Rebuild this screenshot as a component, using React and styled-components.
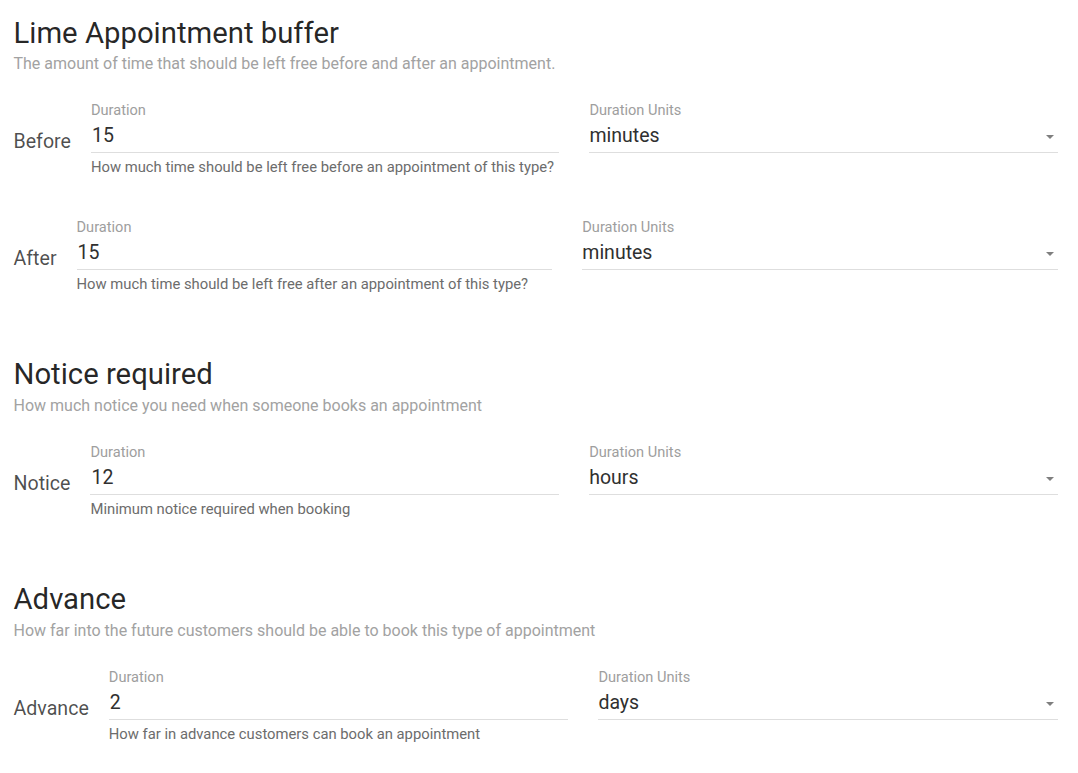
import React from 'react';
import styled, { createGlobalStyle } from 'styled-components';

const GlobalStyle = createGlobalStyle`
  html, body {
    margin: 0;
    padding: 0;
    background: #ffffff;
  }
  body {
    font-family: Roboto, "Noto Sans", sans-serif;
  }
`;

const sections = [
  {
    title: 'Lime Appointment buffer',
    description: 'The amount of time that should be left free before and after an appointment.',
    rows: [
      {
        label: 'Before',
        value: '15',
        unit: 'minutes',
        hint: 'How much time should be left free before an appointment of this type?',
      },
      {
        label: 'After',
        value: '15',
        unit: 'minutes',
        hint: 'How much time should be left free after an appointment of this type?',
      },
    ],
  },
  {
    title: 'Notice required',
    description: 'How much notice you need when someone books an appointment',
    rows: [
      { label: 'Notice', value: '12', unit: 'hours', hint: 'Minimum notice required when booking' },
    ],
  },
  {
    title: 'Advance',
    description: 'How far into the future customers should be able to book this type of appointment',
    rows: [
      { label: 'Advance', value: '2', unit: 'days', hint: 'How far in advance customers can book an appointment' },
    ],
  },
];

function App() {
  return (
    <Page>
      <GlobalStyle />
      {sections.map((section) => (
        <Section key={section.title}>
          <Title>{section.title}</Title>
          <Description>{section.description}</Description>
          <Rows>
            {section.rows.map((row) => (
              <Row key={row.label}>
                <RowLabel>{row.label}</RowLabel>
                <Fields>
                  <Field>
                    <FieldLabel>Duration</FieldLabel>
                    <InputLine>
                      <TextInput type="text" readOnly defaultValue={row.value} />
                    </InputLine>
                    <Hint>{row.hint}</Hint>
                  </Field>
                  <Field>
                    <FieldLabel>Duration Units</FieldLabel>
                    <InputLine>
                      <SelectValue>{row.unit}</SelectValue>
                      <Caret />
                    </InputLine>
                  </Field>
                </Fields>
              </Row>
            ))}
          </Rows>
        </Section>
      ))}
    </Page>
  );
}

export default App;

const Page = styled.div`
  display: flex;
  flex-direction: column;
  gap: 63.5px;
  padding: 14.6px 20px 0 13.5px;
`;

const Section = styled.section`
  display: flex;
  flex-direction: column;
`;

const Title = styled.h2`
  margin: 0;
  font-size: 29.3px;
  line-height: 36px;
  font-weight: 400;
  color: rgba(0, 0, 0, 0.86);
`;

const Description = styled.p`
  margin: 3.7px 0 0;
  font-size: 16px;
  line-height: 20px;
  color: #a2a2a2;
`;

const Rows = styled.div`
  display: flex;
  flex-direction: column;
  gap: 41.5px;
  margin-top: 26.5px;
`;

const Row = styled.div`
  display: flex;
  align-items: flex-start;
`;

const RowLabel = styled.div`
  padding-top: 29.6px;
  margin-right: 20px;
  font-size: 19.6px;
  line-height: 24px;
  color: rgba(0, 0, 0, 0.7);
`;

const Fields = styled.div`
  flex: 1;
  display: flex;
  gap: 30px;
`;

const Field = styled.div`
  flex: 1;
  min-width: 0;
  display: flex;
  flex-direction: column;
`;

const FieldLabel = styled.label`
  font-size: 14.6px;
  line-height: 18px;
  color: #9e9e9e;
`;

const InputLine = styled.div`
  display: flex;
  align-items: center;
  margin-top: 5.3px;
  padding-bottom: 4px;
  border-bottom: 1px solid rgba(0, 0, 0, 0.13);
`;

const TextInput = styled.input`
  flex: 1;
  min-width: 0;
  padding: 0 0 0 1px;
  border: none;
  outline: none;
  background: transparent;
  font-family: inherit;
  font-size: 19.5px;
  line-height: 24px;
  height: 24px;
  color: #303030;
`;

const SelectValue = styled.div`
  flex: 1;
  font-size: 19.5px;
  line-height: 24px;
  color: #303030;
`;

const Caret = styled.span`
  width: 0;
  height: 0;
  margin: 2px 4px 0 0;
  border-left: 4px solid transparent;
  border-right: 4px solid transparent;
  border-top: 4.5px solid rgba(0, 0, 0, 0.5);
`;

const Hint = styled.div`
  margin-top: 5px;
  font-size: 14.8px;
  line-height: 18px;
  color: #6c6c6c;
`;
